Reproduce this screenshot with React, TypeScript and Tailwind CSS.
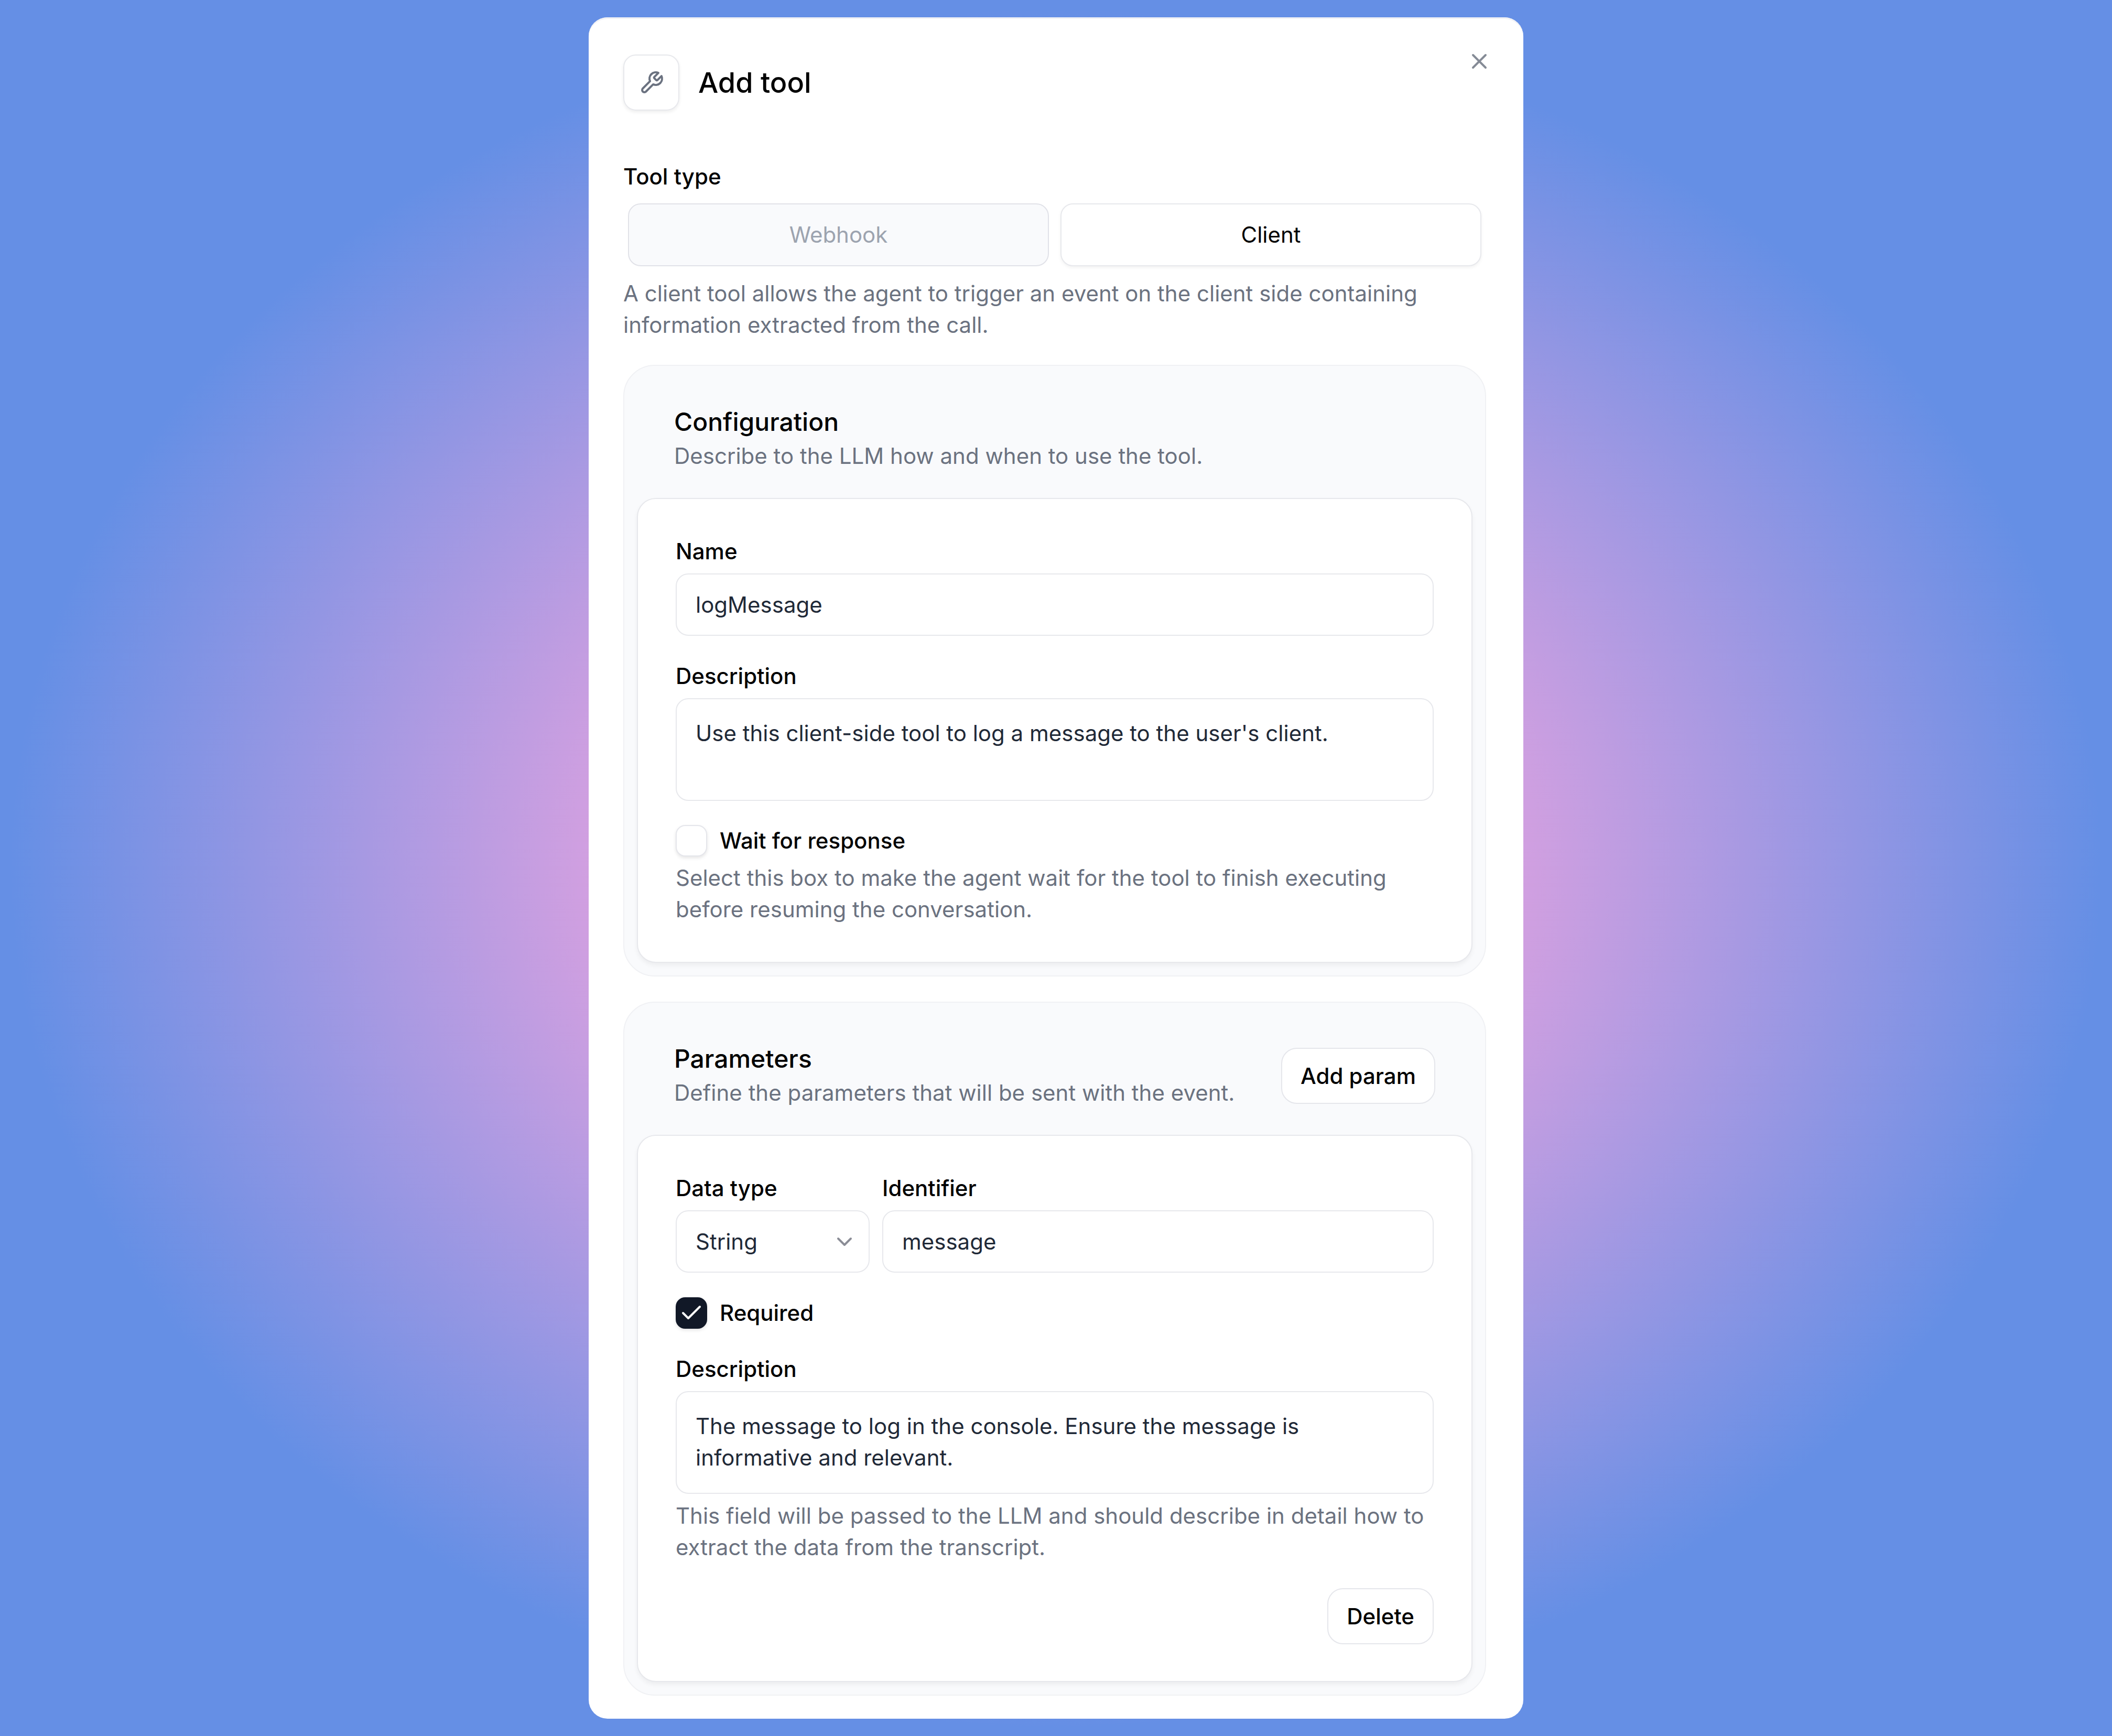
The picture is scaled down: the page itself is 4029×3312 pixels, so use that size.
import { Check, ChevronDown, X } from "lucide-react";
import type { ReactNode } from "react";

const fieldClass =
  "block w-full rounded-[24px] border-2 border-[#e7e8ec] bg-white px-[36px] text-[#1f2937] outline-none focus-visible:border-gray-400";
const buttonClass =
  "h-[107px] shrink-0 rounded-[30px] border-2 border-[#e5e6eb] bg-white px-[35px] font-medium text-black";

function WrenchIcon() {
  return (
    <svg
      viewBox="0 0 24 24"
      fill="none"
      stroke="currentColor"
      strokeWidth={2}
      strokeLinecap="round"
      strokeLinejoin="round"
      className="size-[48px] text-[#6b7280]"
      aria-hidden="true"
    >
      <path d="M14.7 6.3a1 1 0 0 0 0 1.4l1.6 1.6a1 1 0 0 0 1.4 0l3.77-3.77a6 6 0 0 1-7.94 7.94l-6.91 6.91a2.12 2.12 0 0 1-3-3l6.91-6.91a6 6 0 0 1 7.94-7.94l-3.76 3.76z" />
    </svg>
  );
}

function Section({
  title,
  description,
  action,
  children,
}: {
  title: string;
  description: string;
  action?: ReactNode;
  children: ReactNode;
}) {
  return (
    <section className="rounded-[60px] border-2 border-[#f0f1f4] bg-[#f9fafc] p-[24px]">
      <div className="flex items-center justify-between px-[71px] pt-[53px] pb-[50px]">
        <div className="flex flex-col gap-[5px]">
          <h2 className="text-[48px] leading-[60px] font-medium text-black">{title}</h2>
          <p className="text-[#6b7280]">{description}</p>
        </div>
        {action}
      </div>
      <div className="rounded-[36px] border-2 border-[#e7e8ec] bg-white px-[72px] py-[70px] shadow-[0_5px_8px_rgba(0,0,0,0.05)]">
        {children}
      </div>
    </section>
  );
}

function Field({ id, label, className = "", children }: { id: string; label: string; className?: string; children: ReactNode }) {
  return (
    <div className={`flex flex-col gap-[12px] ${className}`}>
      <label htmlFor={id} className="font-medium text-black">
        {label}
      </label>
      {children}
    </div>
  );
}

function Checkbox({ id, label, checked = false }: { id: string; label: string; checked?: boolean }) {
  return (
    <div className="flex h-[59px] items-center gap-[24px]">
      <span className="relative size-[60px]">
        <input
          id={id}
          type="checkbox"
          defaultChecked={checked}
          className="peer block size-full appearance-none rounded-[18px] border-2 border-[#e5e6eb] bg-white shadow-[0_3px_6px_rgba(0,0,0,0.1)] checked:border-[#111827] checked:bg-[#111827]"
        />
        <Check
          className="pointer-events-none absolute inset-0 m-auto hidden size-[48px] text-white peer-checked:block"
          strokeWidth={2}
        />
      </span>
      <label htmlFor={id} className="font-medium text-black">
        {label}
      </label>
    </div>
  );
}

export default function App() {
  return (
    <main className="flex min-h-screen items-start justify-center bg-[radial-gradient(ellipse_closest-side,#d5a0e0_42%,#658fe5_99%)] py-[33px] font-['Inter',sans-serif] text-[42px] leading-[60px] [font-optical-sizing:none]">
      <div
        role="dialog"
        aria-labelledby="dialog-title"
        className="relative w-full max-w-[1783px] rounded-[36px] bg-white pt-[71px] pr-[71px] pb-[44px] pl-[66px] shadow-[inset_0_3px_0_#f1f2f5]"
      >
        <button type="button" aria-label="Close" className="absolute top-[60px] right-[60px] text-[#858b96]">
          <X className="size-[48px]" strokeWidth={2} />
        </button>

        <header className="flex items-center gap-[36px]">
          <div className="flex size-[107px] items-center justify-center rounded-[24px] border-2 border-[#e7e8ec] shadow-[0_3px_6px_rgba(0,0,0,0.07)]">
            <WrenchIcon />
          </div>
          <h1 id="dialog-title" className="text-[54px] font-medium text-black">
            Add tool
          </h1>
        </header>

        <form>
          <div className="mt-[96px]" role="group" aria-labelledby="tool-type">
            <p id="tool-type" className="font-medium text-black">
              Tool type
            </p>
            <div className="mt-[21px] grid grid-cols-2 gap-[22px] px-[9px]">
              <button type="button" className="h-[120px] rounded-[24px] border-2 border-[#e1e2e8] bg-[#f9fafc] text-[#9ca3af]">
                Webhook
              </button>
              <button
                type="button"
                className="h-[120px] rounded-[24px] border-2 border-[#e7e8ec] bg-white text-black shadow-[0_3px_6px_rgba(0,0,0,0.05)]"
              >
                Client
              </button>
            </div>
            <p className="mt-[22px] text-[#6b7280]">
              A client tool allows the agent to trigger an event on the client side containing information extracted from the
              call.
            </p>
          </div>

          <div className="mt-[46px] flex flex-col gap-[48px]">
            <Section title="Configuration" description="Describe to the LLM how and when to use the tool.">
              <Field id="name" label="Name">
                <input id="name" defaultValue="logMessage" className={`${fieldClass} h-[119px]`} />
              </Field>
              <Field id="description" label="Description" className="mt-[47px]">
                <textarea
                  id="description"
                  defaultValue="Use this client-side tool to log a message to the user's client."
                  className={`${fieldClass} h-[196px] resize-none py-[35px]`}
                />
              </Field>
              <div className="mt-[46px] flex flex-col gap-[12px]">
                <Checkbox id="wait" label="Wait for response" />
                <p className="text-[#6b7280]">
                  Select this box to make the agent wait for the tool to finish executing before resuming the conversation.
                </p>
              </div>
            </Section>

            <Section
              title="Parameters"
              description="Define the parameters that will be sent with the event."
              action={
                <button type="button" className={buttonClass}>
                  Add param
                </button>
              }
            >
              <div className="flex gap-[24px]">
                <Field id="data-type" label="Data type" className="w-[370px]">
                  <div className="relative">
                    <select id="data-type" className={`${fieldClass} h-[119px] appearance-none`}>
                      <option>String</option>
                    </select>
                    <ChevronDown
                      className="pointer-events-none absolute inset-y-0 right-[24px] my-auto size-[48px] text-[#8b8d96]"
                      strokeWidth={2}
                    />
                  </div>
                </Field>
                <Field id="identifier" label="Identifier" className="flex-1">
                  <input id="identifier" defaultValue="message" className={`${fieldClass} h-[119px]`} />
                </Field>
              </div>
              <div className="mt-[47px]">
                <Checkbox id="required" label="Required" checked />
              </div>
              <Field id="param-description" label="Description" className="mt-[48px]">
                <textarea
                  id="param-description"
                  defaultValue="The message to log in the console. Ensure the message is informative and relevant."
                  className={`${fieldClass} h-[196px] resize-none py-[35px]`}
                />
                <p className="text-[#6b7280]">
                  This field will be passed to the LLM and should describe in detail how to extract the data from the transcript.
                </p>
              </Field>
              <div className="mt-[48px] flex justify-end">
                <button type="button" className={buttonClass}>
                  Delete
                </button>
              </div>
            </Section>
          </div>
        </form>
      </div>
    </main>
  );
}
